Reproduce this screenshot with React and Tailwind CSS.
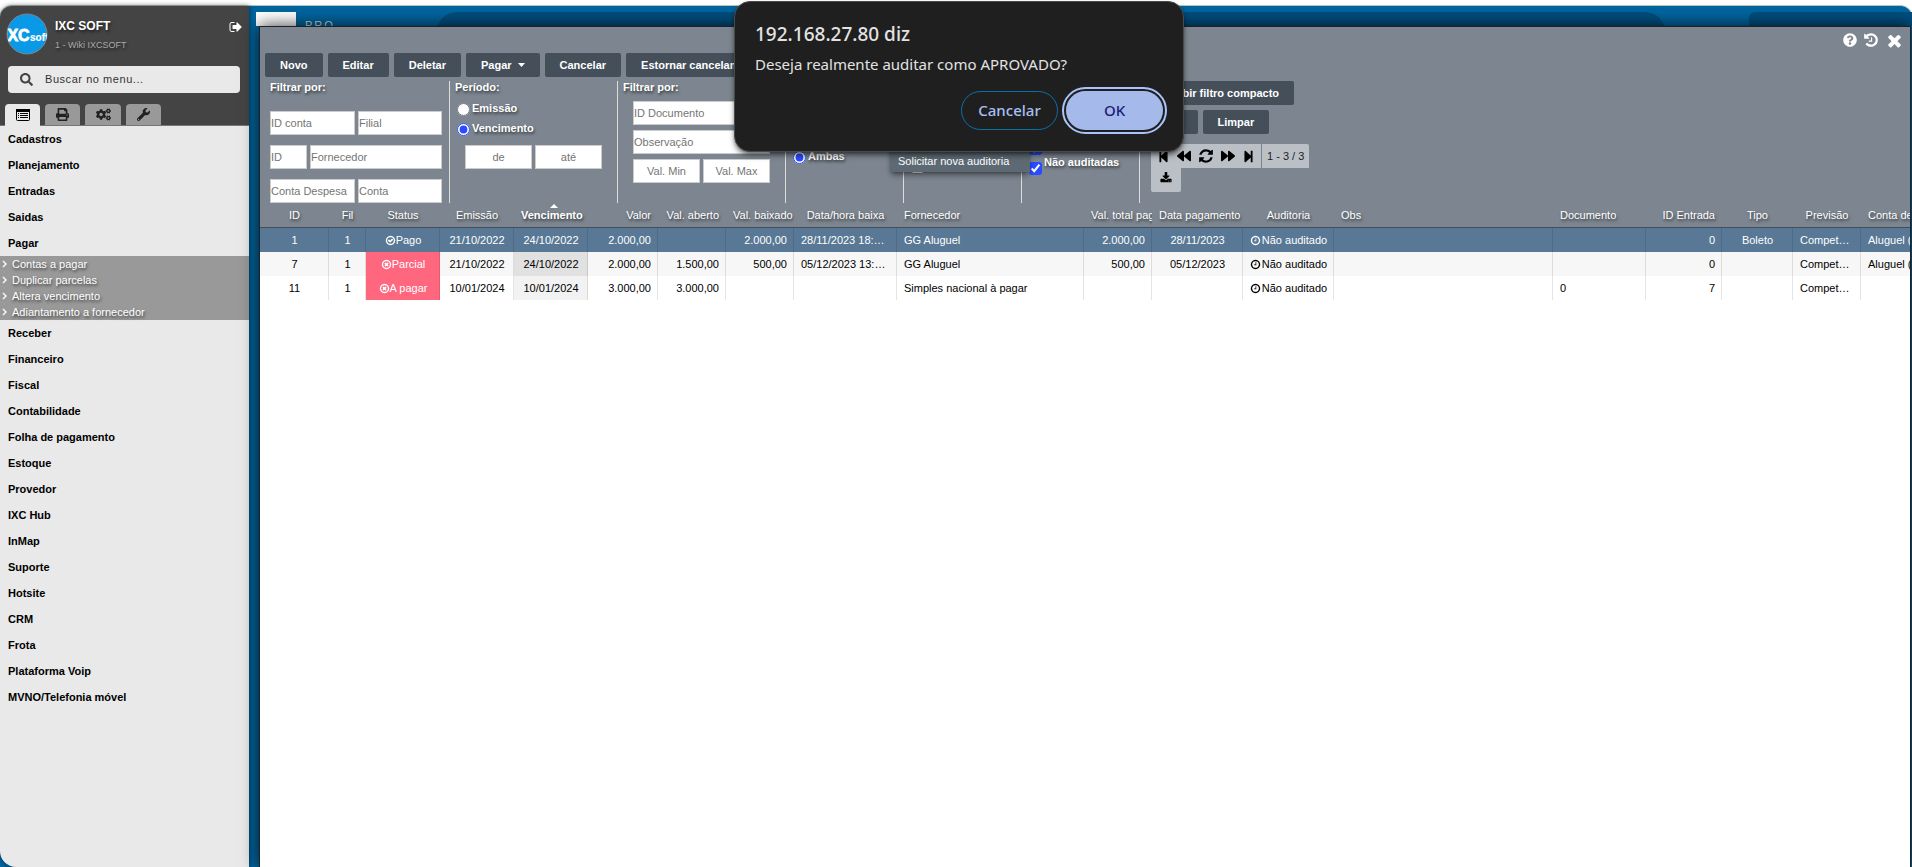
import {
    FaQuestionCircle, FaPrint, FaCogs, FaWrench, FaSearch,
    FaBackward, FaForward, FaStepBackward, FaStepForward,
} from 'react-icons/fa';

const menuTop = ['Cadastros', 'Planejamento', 'Entradas', 'Saidas', 'Pagar'];
const submenu = ['Contas a pagar', 'Duplicar parcelas', 'Altera vencimento', 'Adiantamento a fornecedor'];
const menuBottom = [
    'Receber', 'Financeiro', 'Fiscal', 'Contabilidade', 'Folha de pagamento', 'Estoque', 'Provedor',
    'IXC Hub', 'InMap', 'Suporte', 'Hotsite', 'CRM', 'Frota', 'Plataforma Voip', 'MVNO/Telefonia móvel',
];

const columns = [
    { key: 'id', label: 'ID', width: 69, align: 'center' },
    { key: 'fil', label: 'Fil', width: 37, align: 'center' },
    { key: 'status', label: 'Status', width: 74, align: 'center' },
    { key: 'emissao', label: 'Emissão', width: 74, align: 'center' },
    { key: 'vencimento', label: 'Vencimento', width: 74, align: 'center', sorted: true },
    { key: 'valor', label: 'Valor', width: 70, align: 'right' },
    { key: 'aberto', label: 'Val. aberto', width: 68, align: 'right' },
    { key: 'baixado', label: 'Val. baixado', width: 68, align: 'right' },
    { key: 'baixa', label: 'Data/hora baixa', width: 103, align: 'center' },
    { key: 'fornecedor', label: 'Fornecedor', width: 187, align: 'left' },
    { key: 'pago', label: 'Val. total pago', width: 68, align: 'right' },
    { key: 'pagamento', label: 'Data pagamento', width: 91, align: 'center' },
    { key: 'auditoria', label: 'Auditoria', width: 91, align: 'center' },
    { key: 'obs', label: 'Obs', width: 219, align: 'left' },
    { key: 'documento', label: 'Documento', width: 93, align: 'left' },
    { key: 'entrada', label: 'ID Entrada', width: 76, align: 'right' },
    { key: 'tipo', label: 'Tipo', width: 71, align: 'center' },
    { key: 'previsao', label: 'Previsão', width: 68, align: 'center' },
    { key: 'conta', label: 'Conta despesa', width: 120, align: 'left' },
];

const rows = [
    { id: '1', fil: '1', status: 'Pago', emissao: '21/10/2022', vencimento: '24/10/2022', valor: '2.000,00', baixado: '2.000,00', baixa: '28/11/2023 18:42:10', fornecedor: 'GG Aluguel', pago: '2.000,00', pagamento: '28/11/2023', auditoria: 'Não auditado', entrada: '0', tipo: 'Boleto', previsao: 'Competência', conta: 'Aluguel (Despesa)' },
    { id: '7', fil: '1', status: 'Parcial', emissao: '21/10/2022', vencimento: '24/10/2022', valor: '2.000,00', aberto: '1.500,00', baixado: '500,00', baixa: '05/12/2023 13:20:05', fornecedor: 'GG Aluguel', pago: '500,00', pagamento: '05/12/2023', auditoria: 'Não auditado', entrada: '0', previsao: 'Competência', conta: 'Aluguel (Despesa)' },
    { id: '11', fil: '1', status: 'A pagar', emissao: '10/01/2024', vencimento: '10/01/2024', valor: '3.000,00', aberto: '3.000,00', fornecedor: 'Simples nacional à pagar', auditoria: 'Não auditado', documento: '0', entrada: '7', previsao: 'Competência' },
];

const alignClass = { left: 'text-left', center: 'text-center', right: 'text-right' };

const ring = 'M1440 896q0-148-73-273t-198-198-273-73-273 73-198 198-73 273 73 273 198 198 273 73 273-73 198-198 73-273zm224 0q0 209-103 385.500t-279.500 279.500-385.500 103-385.500-103-279.500-279.500-103-385.500 103-385.500 279.500-279.500 385.500-103 385.500 103 279.500 279.500 103 385.500z';

const icons = {
    signOut: 'M704 1440q0 4 1 20t.5 26.500-3 23.500-10 19.500-20.500 6.500h-320q-119 0-203.500-84.500t-84.500-203.500v-704q0-119 84.500-203.500t203.500-84.500h320q13 0 22.500 9.500t9.500 22.500q0 4 1 20t.5 26.500-3 23.500-10 19.500-20.500 6.500h-320q-66 0-113 47t-47 113v704q0 66 47 113t113 47h312l11.500 1 11.500 3 8 5.500 7 9 2 13.500zm928-544q0 26-19 45l-544 544q-19 19-45 19t-45-19-19-45v-288h-448q-26 0-45-19t-19-45v-384q0-26 19-45t45-19h448v-288q0-26 19-45t45-19 45 19l544 544q19 19 19 45z',
    refresh: 'M1639 1056q0 5-1 7-64 268-268 434.500t-478 166.500q-146 0-282.500-55t-243.500-157l-129 129q-19 19-45 19t-45-19-19-45v-448q0-26 19-45t45-19h448q26 0 45 19t19 45-19 45l-137 137q71 66 161 102t187 36q134 0 250-65t186-179q11-17 53-117 8-23 30-23h192q13 0 22.500 9.500t9.500 22.500zm25-800v448q0 26-19 45t-45 19h-448q-26 0-45-19t-19-45 19-45l138-138q-148-137-349-137-134 0-250 65t-186 179q-11 17-53 117-8 23-30 23h-199q-13 0-22.500-9.500t-9.500-22.500v-7q65-268 270-434.500t480-166.500q146 0 284 55.500t245 156.500l130-129q19-19 45-19t45 19 19 45z',
    download: 'M1344 1344q0-26-19-45t-45-19-45 19-19 45 19 45 45 19 45-19 19-45zm256 0q0-26-19-45t-45-19-45 19-19 45 19 45 45 19 45-19 19-45zm128-224v320q0 40-28 68t-68 28h-1472q-40 0-68-28t-28-68v-320q0-40 28-68t68-28h465l135 136q58 56 136 56t136-56l136-136h464q40 0 68 28t28 68zm-325-569q17 41-14 70l-448 448q-18 19-45 19t-45-19l-448-448q-31-29-14-70 17-39 59-39h256v-448q0-26 19-45t45-19h256q26 0 45 19t19 45v448h256q42 0 59 39z',
    times: 'M1490 1322q0 40-28 68l-136 136q-28 28-68 28t-68-28l-294-294-294 294q-28 28-68 28t-68-28l-136-136q-28-28-28-68t28-68l294-294-294-294q-28-28-28-68t28-68l136-136q28-28 68-28t68 28l294 294 294-294q28-28 68-28t68 28l136 136q28 28 28 68t-28 68l-294 294 294 294q28 28 28 68z',
    history: 'M1664 896q0 156-61 298t-164 245-245 164-298 61q-172 0-327-72.500t-264-204.500q-7-10-6.500-22.500t8.500-20.500l137-138q10-9 25-9 16 2 23 12 73 95 179 147t225 52q104 0 198.500-40.500t163.500-109.500 109.500-163.500 40.500-198.500-40.500-198.500-109.500-163.500-163.500-109.500-198.500-40.500q-98 0-188 35.500t-160 101.500l137 138q31 30 14 69-17 40-59 40h-448q-26 0-45-19t-19-45v-448q0-42 40-59 39-17 69 14l130 129q107-101 244.500-156.500t284.500-55.500q156 0 298 61t245 164 164 245 61 298zm-640-288v448q0 14-9 23t-23 9h-320q-14 0-23-9t-9-23v-64q0-14 9-23t23-9h224v-352q0-14 9-23t23-9h64q14 0 23 9t9 23z',
    clock: `M1024 544v448q0 14-9 23t-23 9h-320q-14 0-23-9t-9-23v-64q0-14 9-23t23-9h224v-352q0-14 9-23t23-9h64q14 0 23 9t9 23z${ring}`,
    checkCircle: `M1299 813l-422 422q-19 19-45 19t-45-19l-294-294q-19-19-19-45t19-45l102-102q19-19 45-19t45 19l147 147 275-275q19-19 45-19t45 19l102 102q19 19 19 45t-19 45z${ring}`,
    timesCircle: `M1225 1079l-146 146q-10 10-23 10t-23-10l-137-137-137 137q-10 10-23 10t-23-10l-146-146q-10-10-10-23t10-23l137-137-137-137q-10-10-10-23t10-23l146-146q10-10 23-10t23 10l137 137 137-137q10-10 23-10t23 10l146 146q10 10 10 23t-10 23l-137 137 137 137q10 10 10 23t-10 23z${ring}`,
};

const Icon = ({ name, className }) => (
    <svg viewBox="0 0 1792 1792" className={`shrink-0 ${className}`} fill="currentColor" fillRule="evenodd" aria-hidden="true">
        <path d={icons[name]} />
    </svg>
);

const ListAltIcon = () => (
    <svg viewBox="0 0 14 12" className="h-3 w-[14px]" aria-hidden="true">
        <rect x="0.500" y="0.500" width="13" height="11" rx="1" fill="none" stroke="currentColor" />
        <path d="M0 0h14v3H0zM2 4h1v1H2zM4 4h8v1H4zM2 6h1v1H2zM4 6h8v1H4zM2 8h1v1H2zM4 8h8v1H4z" fill="currentColor" />
    </svg>
);

const ToolButton = ({ children }) => (
    <button className="flex h-6 shrink-0 items-center gap-[6px] rounded-xs bg-[#444f5a] px-[15px] text-[11px] font-bold whitespace-nowrap text-white">
        {children}
    </button>
);

const Field = ({ label, className = '' }) => (
    <input
        type="text"
        aria-label={label}
        placeholder={label}
        className={`h-6 min-w-0 border border-[#ccc] bg-white text-[11px] text-gray-800 placeholder:text-[#757575] ${className}`}
    />
);

const Option = ({ type = 'radio', name, label, checked }) => (
    <label className="flex h-5 items-center gap-[2px] text-[11px] font-bold text-white text-shadow-[1px_2px_3px_rgb(0_0_0/0.6)]">
        <input type={type} name={name} defaultChecked={checked} className={`size-[13px] shrink-0 accent-[#2a4bff] ${type === 'radio' ? 'mt-[2px]' : 'mt-3'}`} />
        {label}
    </label>
);

const FilterGroup = ({ title, className = '', children }) => (
    <fieldset className={`flex shrink-0 flex-col border-r border-[#ddd] ${className}`}>
        <legend className="float-left h-3 text-[11px] leading-3 font-bold whitespace-nowrap text-white text-shadow-[1px_2px_3px_rgb(0_0_0/0.6)]">{title}</legend>
        {children}
    </fieldset>
);

const Sidebar = () => (
    <aside className="relative z-10 flex w-[249px] shrink-0 flex-col overflow-hidden rounded-tl-xl rounded-bl-2xl bg-[#e9e9e9] shadow-[0_0_5px_rgba(0,0,0,0.6)]">
        <div className="flex flex-col border-b border-[#777] bg-[#444]">
            <div className="flex h-[60px] pt-[7px] pl-[6px]">
                <svg viewBox="0 0 42 42" className="size-[42px] shrink-0" role="img" aria-label="IXC Soft">
                    <defs>
                        <clipPath id="logo"><circle cx="21" cy="21" r="20" /></clipPath>
                    </defs>
                    <circle cx="21" cy="21" r="20" fill="#0a99e6" stroke="#7d868c" />
                    <g clipPath="url(#logo)" fill="#fff" stroke="#fff" fontFamily="Liberation Sans, sans-serif" fontWeight="bold">
                        <text x="-3" y="28" fontSize="16" strokeWidth="0.800">IXC</text>
                        <text x="24" y="28" fontSize="10" strokeWidth="0.200">soft</text>
                    </g>
                </svg>
                <div className="ml-[7px] flex-1 text-shadow-[1px_2px_3px_rgb(0_0_0/0.6)]">
                    <p className="mt-[5px] text-xs leading-4 font-bold text-white">IXC SOFT</p>
                    <p className="mt-[5px] text-[9px] leading-3 text-[#aaa]">1 - Wiki IXCSOFT</p>
                </div>
                <button aria-label="Sair" className="mt-[7px] mr-[6px] self-start text-white"><Icon name="signOut" className="size-[14px]" /></button>
            </div>
            <label className="mx-2 mr-[9px] flex h-[27px] items-center gap-3 rounded bg-[#e9e9e9] pl-3 text-[#444]">
                <FaSearch size={13} />
                <input type="text" aria-label="Buscar no menu" placeholder="Buscar no menu..." className="w-40 text-[11px] tracking-wider outline-none placeholder:text-[#333]" />
            </label>
            <div className="mt-[11px] flex gap-[5px] pl-[5px] text-[#222]">
                <button aria-label="Menu" className="-mb-px flex h-[22px] w-[35px] items-center justify-center rounded-t bg-[#e9e9e9] text-black"><ListAltIcon /></button>
                <button aria-label="Impressões" className="flex h-[21px] w-[35px] items-center justify-center rounded-t bg-[#999]"><FaPrint size={13} /></button>
                <button aria-label="Configurações" className="flex h-[21px] w-9 items-center justify-center rounded-t bg-[#999]"><FaCogs size={15} /></button>
                <button aria-label="Ferramentas" className="flex h-[21px] w-[35px] items-center justify-center rounded-t bg-[#999]"><FaWrench size={13} /></button>
            </div>
        </div>
        <nav className="text-[11px] font-bold text-black">
            {menuTop.map((item) => (
                <a key={item} href="#" className="flex h-[26px] items-center px-2">{item}</a>
            ))}
            <div className="bg-[#999] font-normal text-white text-shadow-[1px_2px_3px_rgb(0_0_0/0.6)]">
                {submenu.map((item) => (
                    <a key={item} href="#" className="flex h-4 items-center gap-[5px] pl-[2px]">
                        <svg viewBox="0 0 5 8" className="h-2 w-[5px]" fill="none" stroke="currentColor" strokeWidth="1.300" aria-hidden="true">
                            <path d="M1 1l3 3-3 3" />
                        </svg>
                        {item}
                    </a>
                ))}
            </div>
            {menuBottom.map((item) => (
                <a key={item} href="#" className="flex h-[26px] items-center px-2">{item}</a>
            ))}
        </nav>
    </aside>
);

const Filters = () => (
    <div className="mt-1 flex h-[122px] pl-[10px]">
        <FilterGroup title="Filtrar por:" className="w-[180px]">
            <div className="mt-[18px] flex w-[172px] flex-col gap-[10px]">
                <div className="flex gap-[3px]">
                    <Field label="ID conta" className="flex-1" />
                    <Field label="Filial" className="w-[84px]" />
                </div>
                <div className="flex gap-[3px]">
                    <Field label="ID" className="w-[37px]" />
                    <Field label="Fornecedor" className="flex-1" />
                </div>
                <div className="flex gap-[3px]">
                    <Field label="Conta Despesa" className="flex-1" />
                    <Field label="Conta" className="w-[84px]" />
                </div>
            </div>
        </FilterGroup>

        <FilterGroup title="Período:" className="w-[168px] pl-[5px]">
            <div className="mt-[5px] pl-[2px]">
                <Option name="periodo" label="Emissão" />
                <Option name="periodo" label="Vencimento" checked />
            </div>
            <div className="mt-[7px] flex gap-[3px] pl-[10px]">
                <Field label="de" className="w-[67px] text-center" />
                <Field label="até" className="w-[67px] text-center" />
            </div>
        </FilterGroup>

        <FilterGroup title="Filtrar por:" className="w-[168px] pl-[5px]">
            <div className="mt-2 flex w-[147px] flex-col gap-[5px] pl-[10px]">
                <Field label="ID Documento" />
                <Field label="Observação" />
                <div className="flex gap-[3px]">
                    <Field label="Val. Min" className="flex-1 text-center" />
                    <Field label="Val. Max" className="flex-1 text-center" />
                </div>
            </div>
        </FilterGroup>

        <FilterGroup title="Contas:" className="w-[118px] pl-[5px]">
            <div className="mt-[13px] pl-[2px]">
                <Option name="contas" label="Abertas" />
                <Option name="contas" label="Pagas" />
                <Option name="contas" label="Ambas" checked />
            </div>
        </FilterGroup>

        <FilterGroup title="Status:" className="w-[118px] pl-[5px]">
            <div className="mt-[18px] pl-[2px]">
                <Option type="checkbox" label="Parcial" />
                <Option type="checkbox" label="Previsão" />
                <Option type="checkbox" label="Cancelado" />
            </div>
        </FilterGroup>

        <FilterGroup title="Auditoria:" className="w-[118px] pl-[5px]">
            <div className="mt-[19px] pl-[2px]">
                <Option type="checkbox" label="Aprovadas" checked />
                <Option type="checkbox" label="Reprovadas" checked />
                <Option type="checkbox" label="Não auditadas" checked />
            </div>
        </FilterGroup>

        <div className="ml-[11px] flex flex-col items-start">
            <ToolButton>Exibir filtro compacto</ToolButton>
            <div className="mt-[5px] flex gap-[5px]">
                <ToolButton>OK</ToolButton>
                <ToolButton>Limpar</ToolButton>
            </div>
            <div className="mt-[10px] flex h-6 rounded-t-xs bg-[#bbc0c7] text-black">
                <div className="flex w-[111px] items-center justify-between border-r border-[#7d8690] px-[6px]">
                    <button aria-label="Primeira página"><FaStepBackward size={13} /></button>
                    <button aria-label="Página anterior"><FaBackward size={14} /></button>
                    <button aria-label="Atualizar"><Icon name="refresh" className="size-4" /></button>
                    <button aria-label="Próxima página"><FaForward size={14} /></button>
                    <button aria-label="Última página"><FaStepForward size={13} /></button>
                </div>
                <span className="px-[5px] text-[11px] leading-6 whitespace-nowrap text-[#222]">1 - 3 / 3</span>
            </div>
            <button aria-label="Exportar" className="flex h-6 w-[30px] items-center justify-center rounded-b-xs bg-[#bbc0c7] pb-1 text-black"><Icon name="download" className="size-3" /></button>
        </div>
    </div>
);

const AccountsTable = () => (
    <table className="w-0 table-fixed border-separate border-spacing-0 text-[11px]">
        <colgroup>
            {columns.map((col) => <col key={col.key} style={{ width: col.width }} />)}
        </colgroup>
        <thead>
            <tr className="h-[25px] bg-[#7d8690] text-white text-shadow-[1px_2px_3px_rgb(0_0_0/0.6)]">
                {columns.map((col) => (
                    <th
                        key={col.key}
                        className={`relative overflow-hidden border-b border-[#444f5a] px-[7px] whitespace-nowrap ${alignClass[col.align]} ${col.sorted ? 'font-bold' : 'font-normal'}`}
                    >
                        {col.sorted && (
                            <svg viewBox="0 0 8 4" className="absolute top-px left-9 h-1 w-2" fill="currentColor" aria-hidden="true">
                                <path d="M0 4l4-4 4 4z" />
                            </svg>
                        )}
                        {col.label}
                    </th>
                ))}
            </tr>
        </thead>
        <tbody>
            {rows.map((row, i) => (
                <tr key={row.id} className={`h-6 ${i === 0 ? 'bg-[#587895] text-white' : i === 1 ? 'bg-[#f7f7f7] text-black' : 'bg-white text-black'}`}>
                    {columns.map((col) => (
                        <td
                            key={col.key}
                            className={`truncate border-r border-black/10 pr-[6px] pl-[7px] ${alignClass[col.align]} ${col.key === 'status' && i > 0 ? 'bg-[#ff677f] text-white' : ''} ${col.sorted && i === 1 ? 'bg-[#e1e1e1]' : ''} ${col.sorted && i === 2 ? 'bg-[#f2f2f2]' : ''}`}
                        >
                            {col.key === 'status' && (
                                <span className="flex items-center justify-center">
                                    <Icon name={row.status === 'Pago' ? 'checkCircle' : 'timesCircle'} className="size-[11px]" />
                                    {row.status}
                                </span>
                            )}
                            {col.key === 'auditoria' && (
                                <span className="flex items-center justify-center gap-px">
                                    <Icon name="clock" className="size-[11px]" />
                                    {row.auditoria}
                                </span>
                            )}
                            {col.key !== 'status' && col.key !== 'auditoria' && row[col.key]}
                        </td>
                    ))}
                </tr>
            ))}
        </tbody>
    </table>
);

const AccountsWindow = () => (
    <section className="relative z-10 mr-px ml-[10px] flex min-w-0 flex-1 flex-col overflow-hidden border border-b-0 border-[#1d2227] bg-white shadow-[0_0_16px_rgba(0,0,0,0.8)]">
        <div className="flex flex-col bg-[#7d8690]">
            <div className="flex h-[26px] items-center justify-end gap-[6px] pr-[6px] text-white">
                <button aria-label="Ajuda"><FaQuestionCircle size={14} /></button>
                <button aria-label="Histórico"><Icon name="history" className="size-4" /></button>
                <button aria-label="Fechar"><Icon name="times" className="size-[19px]" /></button>
            </div>
            <div className="flex gap-[5px] pl-[5px]">
                <ToolButton>Novo</ToolButton>
                <ToolButton>Editar</ToolButton>
                <ToolButton>Deletar</ToolButton>
                <ToolButton>
                    Pagar
                    <svg viewBox="0 0 7 4" className="h-1 w-[7px]" fill="currentColor" aria-hidden="true">
                        <path d="M0 0h7L3.500 4z" />
                    </svg>
                </ToolButton>
                <ToolButton>Cancelar</ToolButton>
                <ToolButton>Estornar cancelamento</ToolButton>
            </div>
            <Filters />
        </div>
        <div className="min-w-0 overflow-hidden">
            <AccountsTable />
        </div>
        {/* Menu de auditoria, aberto sobre os filtros */}
        <div className="absolute top-[101px] left-[630px] flex h-11 w-[140px] items-end bg-[#5d6a74] shadow-md shadow-black/40">
            <button className="h-[22px] w-full px-2 text-left text-[11px] text-white">Solicitar nova auditoria</button>
        </div>
    </section>
);

const ConfirmDialog = () => (
    <div
        role="dialog"
        aria-labelledby="dialog-title"
        className="absolute top-px left-1/2 z-50 flex h-[151px] w-[450px] -translate-x-[222px] flex-col rounded-2xl border border-[#4a4a4a] bg-[#1f1f1f] px-5 pt-[18px] font-['Noto_Sans','Open_Sans',sans-serif] text-[#e3e3e3] shadow-md shadow-black/50"
    >
        <h2 id="dialog-title" className="text-[19px] leading-7 font-medium">192.168.27.80 diz</h2>
        <p className="mt-[2px] text-[15px] leading-7 whitespace-nowrap">Deseja realmente auditar como APROVADO?</p>
        <div className="mt-[13px] flex justify-end gap-2">
            <button className="h-[39px] w-[97px] rounded-full border border-[#0b6fa8] text-[15px] font-medium text-[#a8c0f5]">Cancelar</button>
            <button className="h-[39px] w-[97px] rounded-full bg-[#a5b9ea] text-[15px] font-medium text-[#1c1c78] outline-2 outline-offset-2 outline-[#a8c4fa]">OK</button>
        </div>
    </div>
);

const App = () => {
    return (
        <div className="relative flex min-h-screen flex-col overflow-hidden bg-white pt-[5px] font-['Liberation_Sans',Arial,sans-serif]">
            <div className="flex flex-1 rounded-t-xl border-t border-[#b5c5bd] bg-[#00659f]">
                <Sidebar />
                <main className="flex min-w-0 flex-1 flex-col">
                    <header className="flex h-5 overflow-hidden pt-[6px] pl-[7px]">
                        <div className="h-10 w-10 shrink-0 bg-white" />
                        <p className="ml-[9px] w-[132px] shrink-0 pt-[7px] text-[11px] leading-3 tracking-[2px] whitespace-nowrap text-[#d5dde2]">PRO —</p>
                        <div className="h-10 flex-1 rounded-full bg-[#004f80]" />
                        <div className="ml-[84px] h-10 w-[163px] shrink-0 rounded-tl-md bg-[#004f80]" />
                    </header>
                    <AccountsWindow />
                </main>
            </div>
            <ConfirmDialog />
        </div>
    );
};

export default App;
